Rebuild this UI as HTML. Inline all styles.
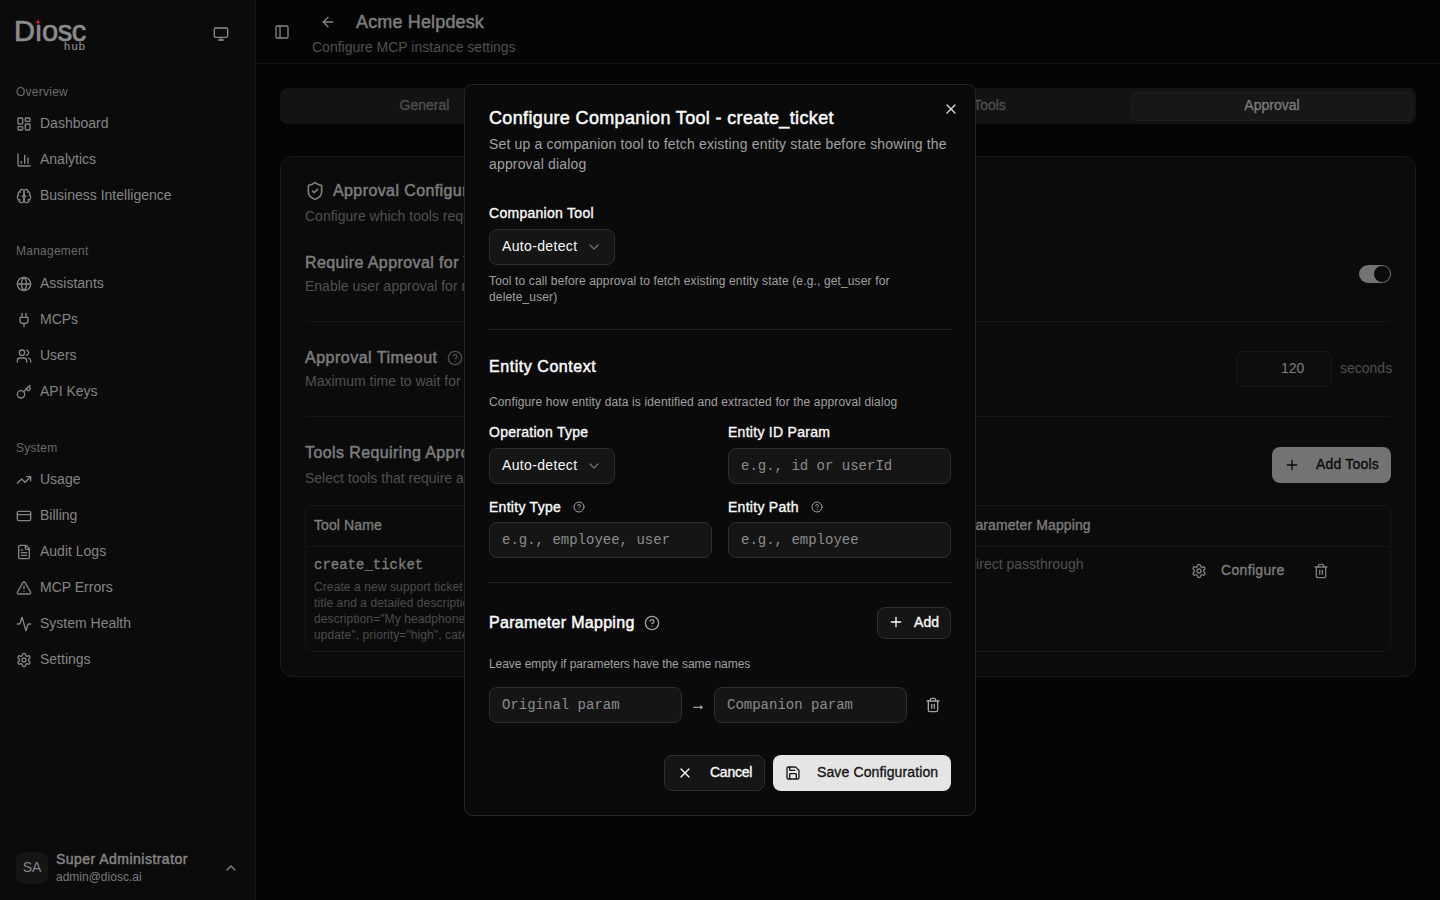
<!DOCTYPE html>
<html><head><meta charset="utf-8">
<style>
*{box-sizing:border-box;margin:0;padding:0}
html,body{width:1440px;height:900px;overflow:hidden;background:#050505;font-family:"Liberation Sans",sans-serif;position:relative}
.a{position:absolute}
.t{position:absolute;white-space:nowrap;line-height:1}
svg.i{position:absolute;fill:none;stroke:currentColor;stroke-width:2;stroke-linecap:round;stroke-linejoin:round}
.s16{width:16px;height:16px}
.s12{width:12px;height:12px}
.s20{width:20px;height:20px}
/* sidebar */
#sb{left:0;top:0;width:256px;height:900px;background:#0b0b0b;border-right:1px solid #161616}
.nav{font-size:14px;color:#858585}
.nl{font-size:12px;color:#6a6a6a;letter-spacing:0.25px}
.nico{color:#858585}
/* modal */
#ov{left:0;top:0;width:1440px;height:900px}
#modal{left:464px;top:84px;width:512px;height:732px;background:#0a0a0a;border:1px solid #262626;border-radius:8px}
.lab{font-size:14px;font-weight:400;color:#fafafa;letter-spacing:0.28px;-webkit-text-stroke:0.35px currentColor}
.med{font-weight:400;-webkit-text-stroke:0.35px currentColor}
.help{font-size:12px;color:#a1a1a1;letter-spacing:0.14px}
.inp{position:absolute;background:#151515;border:1px solid #2e2e2e;border-radius:8px}
.ph{font-family:"Liberation Mono",monospace;font-size:14px;color:#8c8c8c}
.sep{position:absolute;height:1px;background:#232323}
</style></head><body>
<svg width="0" height="0" style="position:absolute">
<defs>
<symbol id="i-monitor" viewBox="0 0 24 24"><rect width="20" height="14" x="2" y="3" rx="2"/><line x1="8" x2="16" y1="21" y2="21"/><line x1="12" x2="12" y1="17" y2="21"/></symbol>
<symbol id="i-panel" viewBox="0 0 24 24"><rect width="18" height="18" x="3" y="3" rx="2"/><path d="M9 3v18"/></symbol>
<symbol id="i-arrow" viewBox="0 0 24 24"><path d="m12 19-7-7 7-7"/><path d="M19 12H5"/></symbol>
<symbol id="i-dash" viewBox="0 0 24 24"><rect width="7" height="9" x="3" y="3" rx="1"/><rect width="7" height="5" x="14" y="3" rx="1"/><rect width="7" height="9" x="14" y="12" rx="1"/><rect width="7" height="5" x="3" y="16" rx="1"/></symbol>
<symbol id="i-chart" viewBox="0 0 24 24"><path d="M3 3v16a2 2 0 0 0 2 2h16"/><path d="M18 17V9"/><path d="M13 17V5"/><path d="M8 17v-3"/></symbol>
<symbol id="i-brain" viewBox="0 0 24 24"><path d="M12 5a3 3 0 1 0-5.997.125 4 4 0 0 0-2.526 5.77 4 4 0 0 0 .556 6.588A4 4 0 1 0 12 18Z"/><path d="M12 5a3 3 0 1 1 5.997.125 4 4 0 0 1 2.526 5.77 4 4 0 0 1-.556 6.588A4 4 0 1 1 12 18Z"/><path d="M15 13a4.5 4.5 0 0 1-3-4 4.5 4.5 0 0 1-3 4"/><path d="M17.599 6.5a3 3 0 0 0 .399-1.375"/><path d="M6.003 5.125A3 3 0 0 0 6.401 6.5"/><path d="M3.477 10.896a4 4 0 0 1 .585-.396"/><path d="M19.938 10.5a4 4 0 0 1 .585.396"/><path d="M6 18a4 4 0 0 1-1.967-.516"/><path d="M19.967 17.484A4 4 0 0 1 18 18"/></symbol>
<symbol id="i-globe" viewBox="0 0 24 24"><circle cx="12" cy="12" r="10"/><path d="M12 2a14.5 14.5 0 0 0 0 20 14.5 14.5 0 0 0 0-20"/><path d="M2 12h20"/></symbol>
<symbol id="i-plug" viewBox="0 0 24 24"><path d="M12 22v-5"/><path d="M9 8V2"/><path d="M15 8V2"/><path d="M18 8v5a4 4 0 0 1-4 4h-4a4 4 0 0 1-4-4V8Z"/></symbol>
<symbol id="i-users" viewBox="0 0 24 24"><path d="M16 21v-2a4 4 0 0 0-4-4H6a4 4 0 0 0-4 4v2"/><circle cx="9" cy="7" r="4"/><path d="M22 21v-2a4 4 0 0 0-3-3.87"/><path d="M16 3.13a4 4 0 0 1 0 7.75"/></symbol>
<symbol id="i-key" viewBox="0 0 24 24"><path d="m15.5 7.5 2.3 2.3a1 1 0 0 0 1.4 0l2.1-2.1a1 1 0 0 0 0-1.4L19 4"/><path d="m21 2-9.6 9.6"/><circle cx="7.5" cy="15.5" r="5.5"/></symbol>
<symbol id="i-trend" viewBox="0 0 24 24"><polyline points="22 7 13.5 15.5 8.5 10.5 2 17"/><polyline points="16 7 22 7 22 13"/></symbol>
<symbol id="i-card" viewBox="0 0 24 24"><rect width="20" height="14" x="2" y="5" rx="2"/><line x1="2" x2="22" y1="10" y2="10"/></symbol>
<symbol id="i-file" viewBox="0 0 24 24"><path d="M15 2H6a2 2 0 0 0-2 2v16a2 2 0 0 0 2 2h12a2 2 0 0 0 2-2V7Z"/><path d="M14 2v4a2 2 0 0 0 2 2h4"/><path d="M10 9H8"/><path d="M16 13H8"/><path d="M16 17H8"/></symbol>
<symbol id="i-alert" viewBox="0 0 24 24"><path d="m21.73 18-8-14a2 2 0 0 0-3.48 0l-8 14A2 2 0 0 0 4 21h16a2 2 0 0 0 1.73-3"/><path d="M12 9v4"/><path d="M12 17h.01"/></symbol>
<symbol id="i-activity" viewBox="0 0 24 24"><path d="M22 12h-2.48a2 2 0 0 0-1.93 1.46l-2.35 8.36a.25.25 0 0 1-.48 0L9.24 2.18a.25.25 0 0 0-.48 0l-2.350 8.36A2 2 0 0 1 4.49 12H2"/></symbol>
<symbol id="i-gear" viewBox="0 0 24 24"><path d="M12.22 2h-.44a2 2 0 0 0-2 2v.18a2 2 0 0 1-1 1.73l-.43.25a2 2 0 0 1-2 0l-.15-.08a2 2 0 0 0-2.730.73l-.22.38a2 2 0 0 0 .73 2.73l.15.1a2 2 0 0 1 1 1.72v.51a2 2 0 0 1-1 1.74l-.15.09a2 2 0 0 0-.73 2.73l.22.38a2 2 0 0 0 2.73.73l.15-.08a2 2 0 0 1 2 0l.43.25a2 2 0 0 1 1 1.73V20a2 2 0 0 0 2 2h.44a2 2 0 0 0 2-2v-.18a2 2 0 0 1 1-1.73l.43-.25a2 2 0 0 1 2 0l.15.08a2 2 0 0 0 2.73-.73l.22-.39a2 2 0 0 0-.73-2.73l-.15-.08a2 2 0 0 1-1-1.740v-.5a2 2 0 0 1 1-1.74l.15-.09a2 2 0 0 0 .73-2.73l-.22-.38a2 2 0 0 0-2.73-.73l-.15.08a2 2 0 0 1-2 0l-.43-.25a2 2 0 0 1-1-1.73V4a2 2 0 0 0-2-2z"/><circle cx="12" cy="12" r="3"/></symbol>
<symbol id="i-cup" viewBox="0 0 24 24"><path d="m18 15-6-6-6 6"/></symbol>
<symbol id="i-cdown" viewBox="0 0 24 24"><path d="m6 9 6 6 6-6"/></symbol>
<symbol id="i-shield" viewBox="0 0 24 24"><path d="M20 13c0 5-3.5 7.5-7.66 8.95a1 1 0 0 1-.67-.01C7.5 20.5 4 18 4 13V6a1 1 0 0 1 1-1c2 0 4.5-1.2 6.24-2.72a1.17 1.17 0 0 1 1.52 0C14.51 3.81 17 5 19 5a1 1 0 0 1 1 1z"/><path d="m9 12 2 2 4-4"/></symbol>
<symbol id="i-help" viewBox="0 0 24 24"><circle cx="12" cy="12" r="10"/><path d="M9.09 9a3 3 0 0 1 5.83 1c0 2-3 3-3 3"/><path d="M12 17h.01"/></symbol>
<symbol id="i-x" viewBox="0 0 24 24"><path d="M18 6 6 18"/><path d="m6 6 12 12"/></symbol>
<symbol id="i-plus" viewBox="0 0 24 24"><path d="M5 12h14"/><path d="M12 5v14"/></symbol>
<symbol id="i-trash" viewBox="0 0 24 24"><path d="M3 6h18"/><path d="M19 6v14c0 1-1 2-2 2H7c-1 0-2-1-2-2V6"/><path d="M8 6V4c0-1 1-2 2-2h4c1 0 2 1 2 2v2"/><line x1="10" x2="10" y1="11" y2="17"/><line x1="14" x2="14" y1="11" y2="17"/></symbol>
<symbol id="i-save" viewBox="0 0 24 24"><path d="M15.2 3a2 2 0 0 1 1.4.6l3.8 3.8a2 2 0 0 1 .6 1.4V19a2 2 0 0 1-2 2H5a2 2 0 0 1-2-2V5a2 2 0 0 1 2-2z"/><path d="M17 21v-7a1 1 0 0 0-1-1H8a1 1 0 0 0-1 1v7"/><path d="M7 3v4a1 1 0 0 0 1 1h7"/></symbol>
</defs></svg>

<!-- ============ SIDEBAR ============ -->
<div id="sb" class="a">
<div class="t " style="left:14px;top:17px;font-size:29px;font-weight:400;color:#8c8c8c;letter-spacing:-0.45px;-webkit-text-stroke:0.7px currentColor">D<span style="position:relative">ı</span>osc</div>
<svg class="a" style="left:33.5px;top:17.7px;width:8px;height:8px" viewBox="0 0 8 8"><path d="M4 0 L4.7 3.3 L8 4 L4.7 4.7 L4 8 L3.3 4.7 L0 4 L3.3 3.3 Z" fill="#b01515"/><circle cx="4" cy="4" r="1" fill="#d04040"/></svg>
<div class="t " style="left:64px;top:41px;font-size:11px;color:#8c8c8c;letter-spacing:1.3px;-webkit-text-stroke:0.2px currentColor">hub</div>
<svg class="i s16" style="left:213px;top:26px;color:#8a8a8a"><use href="#i-monitor"/></svg>
<div class="t nl" style="left:16px;top:86px;">Overview</div>
<svg class="i s16" style="left:16px;top:116px;color:#858585"><use href="#i-dash"/></svg>
<div class="t nav" style="left:40px;top:116px;">Dashboard</div>
<svg class="i s16" style="left:16px;top:152px;color:#858585"><use href="#i-chart"/></svg>
<div class="t nav" style="left:40px;top:152px;">Analytics</div>
<svg class="i s16" style="left:16px;top:188px;color:#858585"><use href="#i-brain"/></svg>
<div class="t nav" style="left:40px;top:188px;">Business Intelligence</div>
<div class="t nl" style="left:16px;top:245px;">Management</div>
<svg class="i s16" style="left:16px;top:276px;color:#858585"><use href="#i-globe"/></svg>
<div class="t nav" style="left:40px;top:276px;">Assistants</div>
<svg class="i s16" style="left:16px;top:312px;color:#858585"><use href="#i-plug"/></svg>
<div class="t nav" style="left:40px;top:312px;">MCPs</div>
<svg class="i s16" style="left:16px;top:348px;color:#858585"><use href="#i-users"/></svg>
<div class="t nav" style="left:40px;top:348px;">Users</div>
<svg class="i s16" style="left:16px;top:384px;color:#858585"><use href="#i-key"/></svg>
<div class="t nav" style="left:40px;top:384px;">API Keys</div>
<div class="t nl" style="left:16px;top:442px;">System</div>
<svg class="i s16" style="left:16px;top:472px;color:#858585"><use href="#i-trend"/></svg>
<div class="t nav" style="left:40px;top:472px;">Usage</div>
<svg class="i s16" style="left:16px;top:508px;color:#858585"><use href="#i-card"/></svg>
<div class="t nav" style="left:40px;top:508px;">Billing</div>
<svg class="i s16" style="left:16px;top:544px;color:#858585"><use href="#i-file"/></svg>
<div class="t nav" style="left:40px;top:544px;">Audit Logs</div>
<svg class="i s16" style="left:16px;top:580px;color:#858585"><use href="#i-alert"/></svg>
<div class="t nav" style="left:40px;top:580px;">MCP Errors</div>
<svg class="i s16" style="left:16px;top:616px;color:#858585"><use href="#i-activity"/></svg>
<div class="t nav" style="left:40px;top:616px;">System Health</div>
<svg class="i s16" style="left:16px;top:652px;color:#858585"><use href="#i-gear"/></svg>
<div class="t nav" style="left:40px;top:652px;">Settings</div>
<div class="a" style="left:16px;top:852px;width:32px;height:32px;border-radius:8px;background:#151515"></div>
<div class="t " style="left:16px;top:860px;width:32px;text-align:center;font-size:14px;color:#858585">SA</div>
<div class="t " style="left:56px;top:852px;font-size:14px;color:#858585;letter-spacing:0.47px;-webkit-text-stroke:0.45px currentColor">Super Administrator</div>
<div class="t " style="left:56px;top:871px;font-size:12px;color:#7a7a7a">admin@diosc.ai</div>
<svg class="i s16" style="left:223px;top:860px;color:#858585"><use href="#i-cup"/></svg>
</div>

<!-- ============ MAIN ============ -->
<div class="a" style="left:256px;top:63px;width:1184px;height:1px;background:#161616"></div>
<svg class="i s16" style="left:274px;top:24px;color:#858585"><use href="#i-panel"/></svg>
<svg class="i s16" style="left:320px;top:14px;color:#858585"><use href="#i-arrow"/></svg>
<div class="t " style="left:356px;top:13px;font-size:18px;color:#7d7d7d;letter-spacing:0.15px;-webkit-text-stroke:0.5px currentColor">Acme Helpdesk</div>
<div class="t " style="left:312px;top:40px;font-size:14px;color:#505050">Configure MCP instance settings</div>
<div class="a" style="left:280px;top:88px;width:1136px;height:36px;border-radius:8px;background:#131313"></div>
<div class="a" style="left:1131px;top:92px;width:282px;height:29px;border-radius:6px;background:#171717;border:1px solid #1e1e1e"></div>
<div class="t " style="left:274.5px;top:98px;width:300px;text-align:center;font-size:14px;color:#505050;-webkit-text-stroke:0.3px currentColor">General</div>
<div class="t " style="left:839.5px;top:98px;width:300px;text-align:center;font-size:14px;color:#505050;-webkit-text-stroke:0.3px currentColor">Tools</div>
<div class="t " style="left:1122px;top:98px;width:300px;text-align:center;font-size:14px;color:#7d7d7d;-webkit-text-stroke:0.3px currentColor">Approval</div>
<div class="a" style="left:280px;top:156px;width:1136px;height:521px;border-radius:12px;background:#0b0b0b;border:1px solid #191919"></div>
<svg class="i s20" style="left:305px;top:181px;color:#7d7d7d"><use href="#i-shield"/></svg>
<div class="t " style="left:333px;top:183px;font-size:16px;color:#7d7d7d;letter-spacing:0.4px;-webkit-text-stroke:0.5px currentColor">Approval Configuration</div>
<div class="t " style="left:305px;top:209px;font-size:14px;color:#505050">Configure which tools require user approval before execution</div>
<div class="t " style="left:305px;top:255px;font-size:16px;color:#7d7d7d;letter-spacing:0.4px;-webkit-text-stroke:0.5px currentColor">Require Approval for Tools</div>
<div class="t " style="left:305px;top:279px;font-size:14px;color:#505050">Enable user approval for mutating tool calls</div>
<div class="a" style="left:1359px;top:265px;width:32px;height:18px;border-radius:9px;background:#737373"></div>
<div class="a" style="left:1374px;top:266px;width:16px;height:16px;border-radius:8px;background:#0b0b0b"></div>
<div class="a" style="left:305px;top:321px;width:1086px;height:1px;background:#151515"></div>
<div class="t " style="left:305px;top:350px;font-size:16px;color:#7d7d7d;letter-spacing:0.5px;-webkit-text-stroke:0.5px currentColor">Approval Timeout</div>
<svg class="i s16" style="left:447px;top:350px;color:#505050"><use href="#i-help"/></svg>
<div class="t " style="left:305px;top:374px;font-size:14px;color:#505050">Maximum time to wait for user approval</div>
<div class="a" style="left:1236px;top:351px;width:96px;height:36px;border-radius:8px;background:#0d0d0d;border:1px solid #191919"></div>
<div class="t " style="left:1281px;top:361px;font-size:14px;color:#7d7d7d">120</div>
<div class="t " style="left:1340px;top:361px;font-size:14px;color:#505050">seconds</div>
<div class="a" style="left:305px;top:416px;width:1086px;height:1px;background:#151515"></div>
<div class="t " style="left:305px;top:445px;font-size:16px;color:#7d7d7d;letter-spacing:0.4px;-webkit-text-stroke:0.5px currentColor">Tools Requiring Approval</div>
<div class="t " style="left:305px;top:471px;font-size:14px;color:#505050">Select tools that require approval before execution</div>
<div class="a" style="left:1272px;top:447px;width:119px;height:36px;border-radius:8px;background:#737373"></div>
<svg class="i s16" style="left:1284px;top:457px;color:#0b0b0b"><use href="#i-plus"/></svg>
<div class="t " style="left:1316px;top:457px;font-size:14px;color:#0b0b0b;letter-spacing:0.18px;-webkit-text-stroke:0.35px currentColor">Add Tools</div>
<div class="a" style="left:305px;top:505px;width:1086px;height:147px;border-radius:8px;border:1px solid #171717"></div>
<div class="a" style="left:306px;top:546px;width:1084px;height:1px;background:#151515"></div>
<div class="t " style="left:314px;top:518px;font-size:14px;color:#7d7d7d;letter-spacing:0.1px;-webkit-text-stroke:0.35px currentColor">Tool Name</div>
<div class="t " style="left:966px;top:518px;font-size:14px;color:#7d7d7d;letter-spacing:0.1px;-webkit-text-stroke:0.35px currentColor">Parameter Mapping</div>
<div class="t " style="left:314px;top:558px;font-family:'Liberation Mono';font-size:14px;color:#7d7d7d;-webkit-text-stroke:0.3px currentColor">create_ticket</div>
<div class="t " style="left:314px;top:581px;font-size:12px;color:#4c4c4c;letter-spacing:0.1px">Create a new support ticket with a</div>
<div class="t " style="left:314px;top:597px;font-size:12px;color:#4c4c4c;letter-spacing:0.1px">title and a detailed description, e.g.</div>
<div class="t " style="left:314px;top:613px;font-size:12px;color:#4c4c4c;letter-spacing:0.1px">description="My headphones need an</div>
<div class="t " style="left:314px;top:629px;font-size:12px;color:#4c4c4c;letter-spacing:0.1px">update", priority="high", category=</div>
<div class="t " style="left:966px;top:557px;font-size:14px;color:#505050">Direct passthrough</div>
<svg class="i s16" style="left:1191px;top:563px;color:#7d7d7d"><use href="#i-gear"/></svg>
<div class="t " style="left:1221px;top:563px;font-size:14px;color:#7d7d7d;letter-spacing:0.33px;-webkit-text-stroke:0.35px currentColor">Configure</div>
<svg class="i s16" style="left:1313px;top:563px;color:#7d7d7d"><use href="#i-trash"/></svg>

<!-- ============ MODAL ============ -->
<div id="modal" class="a"></div>
<div class="t " style="left:489px;top:109px;font-size:18px;color:#fafafa;letter-spacing:0.35px;-webkit-text-stroke:0.5px currentColor">Configure Companion Tool - create_ticket</div>
<div class="t " style="left:489px;top:137px;font-size:14px;color:#a1a1a1;letter-spacing:0.16px">Set up a companion tool to fetch existing entity state before showing the</div>
<div class="t " style="left:489px;top:157px;font-size:14px;color:#a1a1a1;letter-spacing:0.16px">approval dialog</div>
<svg class="i s16" style="left:943px;top:101px;color:#d4d4d4"><use href="#i-x"/></svg>
<div class="t lab" style="left:489px;top:206px;">Companion Tool</div>
<div class="inp" style="left:489px;top:229px;width:126px;height:36px"></div>
<div class="t " style="left:502px;top:239px;font-size:14px;color:#fafafa;letter-spacing:0.35px">Auto-detect</div>
<svg class="i s16" style="left:586px;top:239px;color:#6e6e6e"><use href="#i-cdown"/></svg>
<div class="t help" style="left:489px;top:275px;">Tool to call before approval to fetch existing entity state (e.g., get_user for</div>
<div class="t help" style="left:489px;top:291px;">delete_user)</div>
<div class="sep" style="left:489px;top:329px;width:462px"></div>
<div class="t " style="left:489px;top:359px;font-size:16px;color:#fafafa;letter-spacing:0.55px;-webkit-text-stroke:0.5px currentColor">Entity Context</div>
<div class="t help" style="left:489px;top:396px;">Configure how entity data is identified and extracted for the approval dialog</div>
<div class="t lab" style="left:489px;top:425px;">Operation Type</div>
<div class="t lab" style="left:728px;top:425px;">Entity ID Param</div>
<div class="inp" style="left:489px;top:448px;width:126px;height:36px"></div>
<div class="t " style="left:502px;top:458px;font-size:14px;color:#fafafa;letter-spacing:0.35px">Auto-detect</div>
<svg class="i s16" style="left:586px;top:458px;color:#6e6e6e"><use href="#i-cdown"/></svg>
<div class="inp" style="left:728px;top:448px;width:223px;height:36px"></div>
<div class="t ph" style="left:741px;top:459px;">e.g., id or userId</div>
<div class="t lab" style="left:489px;top:500px;">Entity Type</div>
<svg class="i s12" style="left:573px;top:501px;color:#a1a1a1"><use href="#i-help"/></svg>
<div class="t lab" style="left:728px;top:500px;">Entity Path</div>
<svg class="i s12" style="left:811px;top:501px;color:#a1a1a1"><use href="#i-help"/></svg>
<div class="inp" style="left:489px;top:522px;width:223px;height:36px"></div>
<div class="t ph" style="left:502px;top:533px;">e.g., employee, user</div>
<div class="inp" style="left:728px;top:522px;width:223px;height:36px"></div>
<div class="t ph" style="left:741px;top:533px;">e.g., employee</div>
<div class="sep" style="left:489px;top:582px;width:462px"></div>
<div class="t " style="left:489px;top:615px;font-size:16px;color:#fafafa;letter-spacing:0.3px;-webkit-text-stroke:0.5px currentColor">Parameter Mapping</div>
<svg class="i s16" style="left:644px;top:615px;color:#a1a1a1"><use href="#i-help"/></svg>
<div class="inp" style="left:877px;top:607px;width:74px;height:32px"></div>
<svg class="i s16" style="left:888px;top:614px;color:#fafafa"><use href="#i-plus"/></svg>
<div class="t " style="left:914px;top:615px;font-size:14px;color:#fafafa;letter-spacing:0.1px;-webkit-text-stroke:0.35px currentColor">Add</div>
<div class="t help" style="left:489px;top:658px;letter-spacing:-0.05px">Leave empty if parameters have the same names</div>
<div class="inp" style="left:489px;top:687px;width:193px;height:36px"></div>
<div class="t ph" style="left:502px;top:698px;">Original param</div>
<svg class="a" style="left:692px;top:702px;width:12px;height:10px" viewBox="0 0 12 10"><path d="M1.2 5.3h7.6" fill="none" stroke="#b0b0b0" stroke-width="1.1"/><path d="M8.3 3.1 L11.1 5.3 L8.3 7.5 Z" fill="#b0b0b0"/></svg>
<div class="inp" style="left:714px;top:687px;width:193px;height:36px"></div>
<div class="t ph" style="left:727px;top:698px;">Companion param</div>
<svg class="i s16" style="left:925px;top:697px;color:#a1a1a1"><use href="#i-trash"/></svg>
<div class="inp" style="left:664px;top:755px;width:101px;height:36px"></div>
<svg class="i s16" style="left:677px;top:765px;color:#fafafa"><use href="#i-x"/></svg>
<div class="t " style="left:710px;top:765px;font-size:14px;color:#fafafa;letter-spacing:-0.25px;-webkit-text-stroke:0.35px currentColor">Cancel</div>
<div class="a" style="left:773px;top:755px;width:178px;height:36px;border-radius:8px;background:#e5e5e5"></div>
<svg class="i s16" style="left:785px;top:765px;color:#171717"><use href="#i-save"/></svg>
<div class="t " style="left:817px;top:765px;font-size:14px;color:#171717;letter-spacing:0.12px;-webkit-text-stroke:0.35px currentColor">Save Configuration</div>
</body></html>
